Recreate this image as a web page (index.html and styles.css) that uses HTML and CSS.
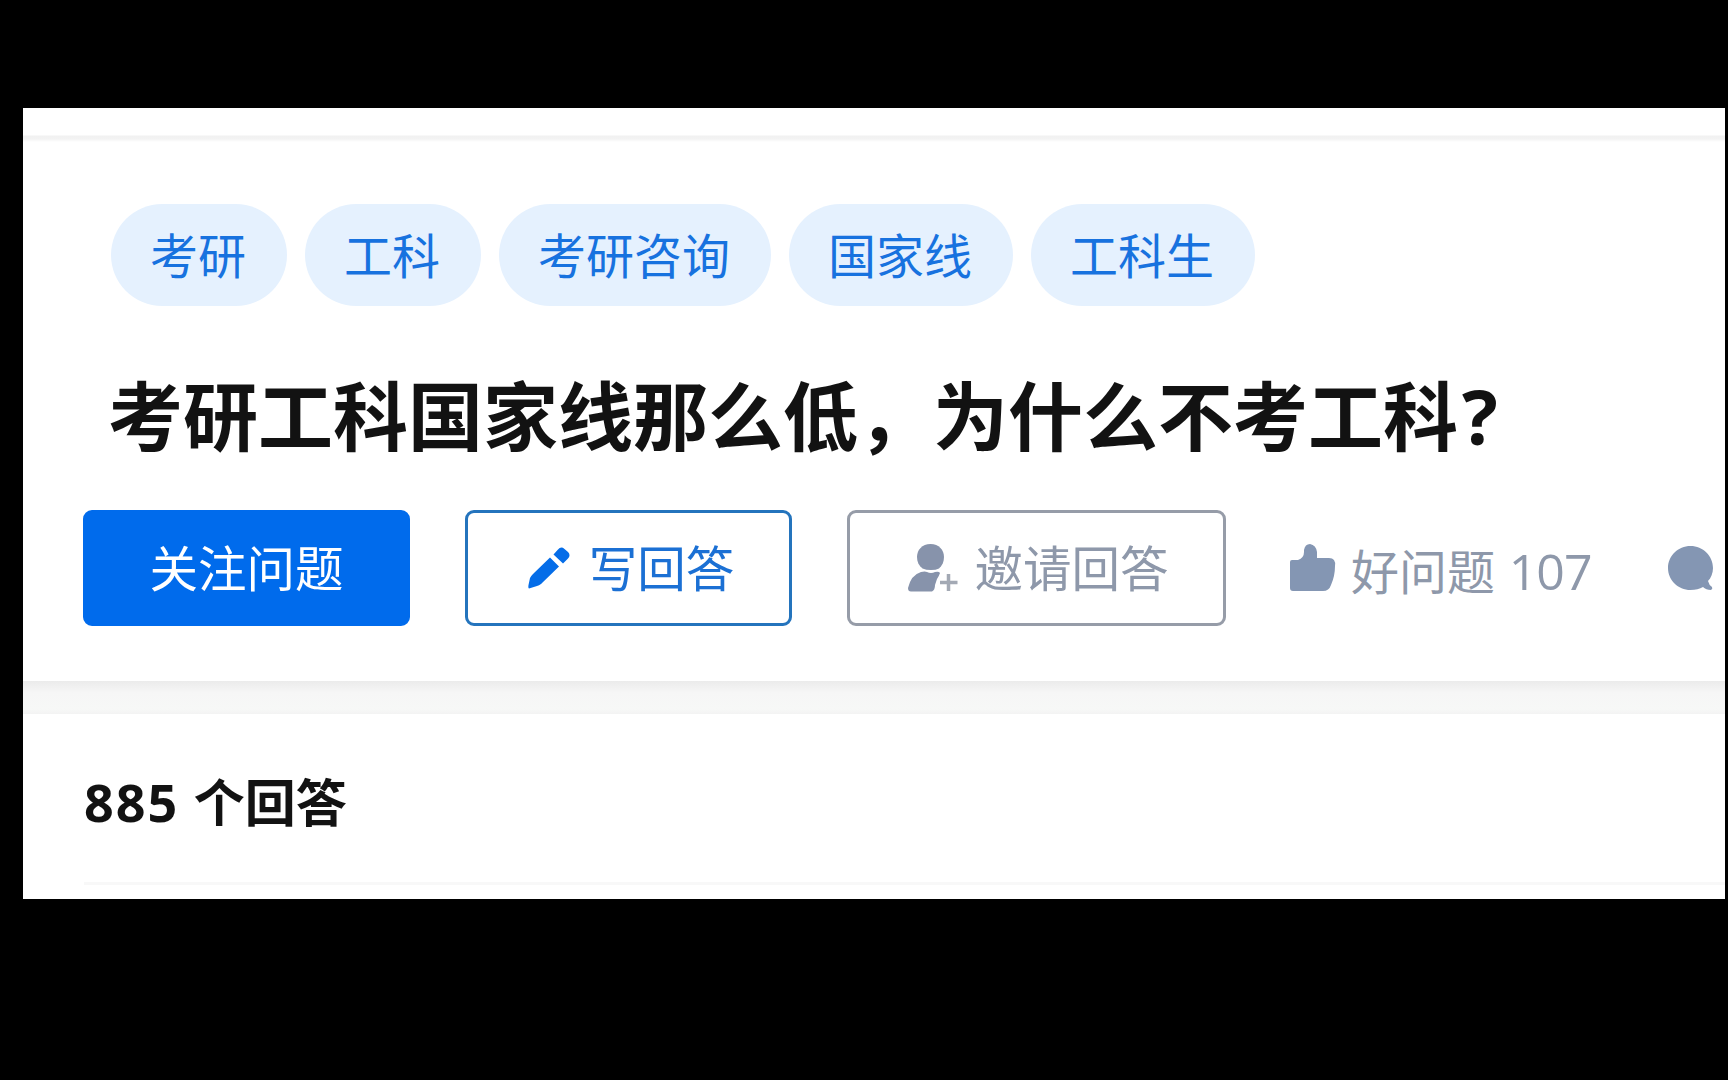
FILE: index.html
```
<!DOCTYPE html>
<html lang="zh-CN">
<head>
    <meta charset="UTF-8">
    <meta name="viewport" content="width=device-width, initial-scale=1.0">
    <title>考研工科国家线那么低，为什么不考工科?</title>
    <link rel="stylesheet" href="styles.css">
</head>

<body>
    <div class="page">
        <div class="top-bar"></div>
        <header class="question">
            <div class="topics">
                <a class="topic">考研</a>
                <a class="topic">工科</a>
                <a class="topic">考研咨询</a>
                <a class="topic">国家线</a>
                <a class="topic">工科生</a>
            </div>
            <h1 class="title">考研工科国家线那么低，为什么不考工科<span class="latin">?</span></h1>
            <div class="actions">
                <button class="btn btn-primary"><span>关注问题</span></button>
                <button class="btn btn-outline">
                    <svg class="icon icon-pencil" viewBox="0 0 42 42">
                        <path d="M1 41.500 Q0 41 0.500 38 L2 31 Q3 29 5 27 L22 10.500 L31 19.500 L13 37 Q11 38.500 9 39 Z M25.500 7.500 L30 2.500 Q33 -1 36.500 2 L40 5 Q43 8 40 11.500 L35 16.500 Z"/>
                    </svg>
                    <span>写回答</span>
                </button>
                <button class="btn btn-grey">
                    <svg class="icon icon-invite" viewBox="0 0 50 48">
                        <path d="M22.500 0 C31 0 36 6 36 13 C36 18 34 22 31 24.500 Q28 26 23 26 Q18 26 14.500 24.500 C11 22 9 18 9 13 C9 6 14 0 22.500 0 Z"/>
                        <path d="M13 28 Q17 27 19 28 Q23 30 27 28 Q31 27 32 29 Q31 32 29 35 L27 41 Q27 46 24 47.500 L3 47.500 Q0 47.500 0 44 Q3 31 13 28 Z"/>
                        <path class="plus" d="M40.500 30 V47 M32 38.500 H49.500"/>
                    </svg>
                    <span>邀请回答</span>
                </button>
                <div class="stat">
                    <svg class="icon icon-like" viewBox="0 0 46 48">
                        <path d="M2 16 H8 Q14 14 14 8 V6 Q15 0 20 0 Q26 1 27 8 V14 H39 Q46 14 45 22 Q45 32 41 41 Q39 47 33 47 H3 Q0 47 0 44 V18 Q0 16 2 16 Z"/>
                    </svg>
                    <span class="stat-label">好问题 <span class="stat-num">107</span></span>
                </div>
                <svg class="icon icon-comment" viewBox="0 0 46 45">
                    <path d="M22.500 0 C35 0 45 10 45 22 C45 27 43 32 40 35 Q41 39 44 41 Q45 43 43 44 Q38 44 35 41 Q30 44 22.500 44 C10 44 0 34 0 22 C0 10 10 0 22.500 0 Z"/>
                </svg>
            </div>
        </header>
        <div class="gutter"></div>
        <main class="answers">
            <h2 class="answers-count"><span class="num">885</span> 个回答</h2>
        </main>
    </div>
</body>

</html>
```
FILE: styles.css
```
* {
    box-sizing: border-box;
}

body {
    margin: 0;
    height: 1080px;
    padding: 108px 3px 0 23px;
    background: #000;
    overflow: hidden;
    font-family: 'Noto Sans CJK SC', sans-serif;
}

.page {
    height: 791px;
    background: #fff;
    overflow: hidden;
}

.top-bar {
    height: 34px;
    background: linear-gradient(#fff 27px, #f1f1f1 28px, #f3f3f3 31px, #fff);
}

/* Question header */
.question {
    height: 539px;
    padding: 62px 0 0 52px;
}

.topics {
    display: flex;
    gap: 18px;
    padding-left: 36px;
}

.topic {
    height: 102px;
    padding: 0 41px 0 39px;
    border-radius: 51px;
    background: #e5f1fe;
    color: #1772df;
    font-size: 48px;
    line-height: 98px;
    white-space: nowrap;
}

.title {
    margin: 51px 0 0 33px;
    height: 112px;
    color: #121212;
    font-size: 75px;
    font-weight: 700;
    line-height: 111px;
    white-space: nowrap;
}

.latin {
    margin-left: 4px;
    font-family: 'Open Sans', sans-serif;
    font-weight: 700;
}

.actions {
    display: flex;
    align-items: center;
    margin-top: 41px;
    padding-left: 8px;
    width: 1680px;
}

.btn {
    display: flex;
    align-items: center;
    justify-content: center;
    flex: none;
    width: 327px;
    height: 116px;
    margin-right: 55px;
    padding: 0;
    border: 3px solid;
    border-radius: 9px;
    background: #fff;
    font-family: inherit;
    font-size: 48.5px;
    line-height: 1;
}

.btn span {
    padding-bottom: 4px;
}

.btn-primary {
    border-color: #006bec;
    background: #006bec;
    color: #fff;
}

.btn-outline {
    padding-left: 5px;
    border-color: #2474bd;
    color: #1b70d4;
}

.btn-grey {
    width: 379px;
    padding-left: 4px;
    border-color: #969ca8;
    color: #8e98aa;
}

.icon {
    flex: none;
    fill: #8496b3;
}

.icon-pencil {
    width: 42px;
    height: 42px;
    margin-right: 19px;
    fill: #056de8;
}

.icon-invite {
    width: 50px;
    height: 48px;
    margin-right: 16px;
    fill: #8793ab;
}

.plus {
    fill: none;
    stroke: #a3a9b4;
    stroke-width: 3.5;
}

.stat {
    display: flex;
    align-items: center;
    margin-left: 9px;
    color: #8e98aa;
    font-size: 48px;
    line-height: 1;
    white-space: nowrap;
}

.stat-label {
    padding-top: 1px;
}

.stat-num {
    margin-left: 3px;
    font-family: 'Open Sans', sans-serif;
    font-size: 50px;
    letter-spacing: -1px;
    line-height: 0;
}

.icon-like {
    width: 46px;
    height: 48px;
    margin-right: 15px;
}

.icon-comment {
    width: 46px;
    height: 45px;
    margin-left: 76px;
}

/* Space between the two cards, with the header's shadow */
.gutter {
    height: 33px;
    background: linear-gradient(#ebebeb, #f6f6f6 35%, #f7f8f7 85%, #f3f3f3);
}

.answers {
    padding-left: 61px;
}

.answers-count {
    margin: 0;
    height: 171px;
    border-bottom: 3px solid #f8f8f8;
    color: #121212;
    font-size: 51px;
    font-weight: 700;
    line-height: 172px;
}

.num {
    margin-right: 3px;
    font-family: 'Open Sans', sans-serif;
    font-size: 52px;
    letter-spacing: 2px;
    line-height: 0;
}
```
